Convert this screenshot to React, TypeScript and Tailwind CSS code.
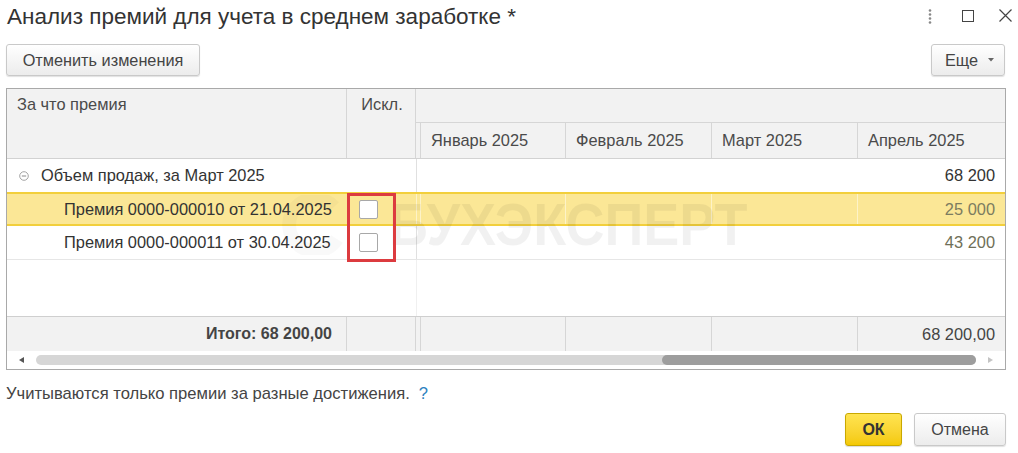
import React from "react";

const F = { fontFamily: '"Liberation Sans", Arial, sans-serif' };

function Checkbox() {
  return <div className="w-[19px] h-[19px] bg-white border border-[#a8a8a8] rounded-[2px]" />;
}

export default function App() {
  const months = [
    { name: "Январь 2025", w: "w-[145px]" },
    { name: "Февраль 2025", w: "w-[146px]" },
    { name: "Март 2025", w: "w-[146px]" },
    { name: "Апрель 2025", w: "w-[147px]" },
  ];
  return (
    <div style={F} className="w-[1018px] h-[453px] bg-white text-[#333] relative overflow-hidden">
      {/* Title bar */}
      <div className="h-[34px] flex items-center justify-between pl-[7px] pr-[6px]">
        <div className="text-[22.5px] leading-[28px] text-[#333] -mt-[1px]">Анализ премий для учета в среднем заработке *</div>
        <div className="flex items-center -mt-[3px]">
          <svg width="6" height="16" viewBox="0 0 6 16" className="mr-[29px]">
            <circle cx="3" cy="2.5" r="1.3" fill="#888" />
            <circle cx="3" cy="6.5" r="1.3" fill="#888" />
            <circle cx="3" cy="10.5" r="1.3" fill="#888" />
            <circle cx="3" cy="14.5" r="1.3" fill="#888" />
          </svg>
          <svg width="12" height="12" viewBox="0 0 12 12" className="mr-[25px]">
            <rect x="0.5" y="0.5" width="11" height="11" fill="none" stroke="#444" strokeWidth="1" />
          </svg>
          <svg width="13" height="13" viewBox="0 0 13 13">
            <path d="M0.5 0.5 L12.5 12.5 M12.5 0.5 L0.5 12.5" stroke="#444" strokeWidth="1.2" />
          </svg>
        </div>
      </div>

      {/* Toolbar */}
      <div className="mt-[10px] h-[32px] flex justify-between pl-[6px] pr-[13px]">
        <button className="h-[32px] w-[194px] rounded-[3px] border border-[#c9c9c9] bg-gradient-to-b from-white to-[#ececec] text-[16.3px] text-[#444] shadow-[0_1px_1px_rgba(0,0,0,0.12)]">
          Отменить изменения
        </button>
        <button className="h-[32px] w-[74px] rounded-[3px] border border-[#c9c9c9] bg-gradient-to-b from-white to-[#ececec] text-[16.3px] text-[#444] shadow-[0_1px_1px_rgba(0,0,0,0.12)] flex items-center justify-center gap-[10px] pl-[3px]">
          <span>Еще</span>
          <svg width="6" height="4" viewBox="0 0 6 4"><path d="M0 0 L6 0 L3 3.5 Z" fill="#666" /></svg>
        </button>
      </div>

      {/* Table */}
      <div className="mt-[12px] ml-[6px] w-[1000px] h-[282px] border border-[#a9a9a9] relative text-[16.4px]">
        {/* Header */}
        <div className="flex h-[70px] bg-[#f2f2f2] border-b border-[#d2d2d2] text-[#4a4a4a]">
          <div className="w-[340px] border-r border-[#d6d6d6] pl-[10px] pt-[4px] leading-[22px]">За что премия</div>
          <div className="w-[69px] border-r border-[#d6d6d6] pt-[4px] leading-[22px] text-center pl-[2px]">Искл.</div>
          <div className="flex-1 flex flex-col">
            <div className="h-[34px] border-b border-[#d6d6d6]" />
            <div className="flex-1 flex">
              <div className="w-[5px] border-r border-[#d6d6d6]" />
              {months.map((m) => (
                <div key={m.name} className={`${m.w} border-r border-[#d6d6d6] last:border-r-0 pl-[10px] flex items-center`}>
                  {m.name}
                </div>
              ))}
            </div>
          </div>
        </div>

        {/* Group row */}
        <div className="flex h-[34px] border-b border-[#ececec]">
          <div className="w-[340px] flex items-center pl-[12px]">
            <svg width="10" height="10" viewBox="0 0 10 10" className="mr-[12px]">
              <circle cx="5" cy="5" r="4.3" fill="none" stroke="#9a9a9a" strokeWidth="0.9" />
              <path d="M2.8 5 H7.2" stroke="#8a8a8a" strokeWidth="1" />
            </svg>
            <span>Объем продаж, за Март 2025</span>
          </div>
          <div className="w-[69px]" />
          <div className="flex-1 border-l border-[#e0e0e0] flex items-center justify-end pr-[10px]">68 200</div>
        </div>

        {/* Row 1 highlighted */}
        <div className="flex h-[34px] bg-[#fbe796] border-y-[2px] border-[#f2cf3c] -mt-[1px]">
          <div className="w-[340px] flex items-center pl-[57px]">Премия 0000-000010 от 21.04.2025</div>
          <div className="w-[69px] flex items-center pl-[12px]"><Checkbox /></div>
          <div className="w-[5px] border-l border-r border-[#fdf3c8]" />
          <div className="w-[145px] border-r border-[#fdf3c8]" />
          <div className="w-[146px] border-r border-[#fdf3c8]" />
          <div className="w-[146px] border-r border-[#fdf3c8]" />
          <div className="flex-1 flex items-center justify-end pr-[10px] text-[#7c7c60]">25 000</div>
        </div>

        {/* Row 2 */}
        <div className="flex h-[34px] border-b border-[#e6e6e6]">
          <div className="w-[340px] flex items-center pl-[57px]">Премия 0000-000011 от 30.04.2025</div>
          <div className="w-[69px] flex items-center pl-[12px]"><Checkbox /></div>
          <div className="flex-1 border-l border-[#e0e0e0] flex items-center justify-end pr-[10px] text-[#6f6f58]">43 200</div>
        </div>

        {/* Empty area */}
        <div className="flex h-[57px] border-b border-[#cfcfcf]">
          <div className="w-[409px]" />
          <div className="flex-1 border-l border-[#f0f0f0]" />
        </div>

        {/* Footer totals */}
        <div className="flex h-[34px] bg-[#f2f2f2] text-[#444]">
          <div className="w-[340px] border-r border-[#d6d6d6] flex items-center justify-end pr-[14px] font-bold text-[16px]">Итого: 68 200,00</div>
          <div className="w-[69px] border-r border-[#d6d6d6]" />
          <div className="w-[5px] border-r border-[#d6d6d6]" />
          <div className="w-[145px] border-r border-[#d6d6d6]" />
          <div className="w-[146px] border-r border-[#d6d6d6]" />
          <div className="w-[146px] border-r border-[#d6d6d6]" />
          <div className="flex-1 flex items-center justify-end pr-[10px]">68 200,00</div>
        </div>

        {/* Scrollbar */}
        <div className="h-[17px] flex items-center pl-[12px] pr-[12px]">
          <svg width="5" height="6" viewBox="0 0 5 6" className="mr-[12px]"><path d="M5 0 L0 3 L5 6 Z" fill="#555" /></svg>
          <div className="flex-1 h-[10px] rounded-full bg-[#d6d6d6] flex">
            <div className="w-[626px]" />
            <div className="flex-1 rounded-full bg-[#9d9d9d]" />
          </div>
          <svg width="5" height="6" viewBox="0 0 5 6" className="ml-[12px]"><path d="M0 0 L5 3 L0 6 Z" fill="#c4c4c4" /></svg>
        </div>

        {/* Watermark */}
        <div className="absolute left-[272px] top-[106px] pointer-events-none flex items-center">
          <svg width="70" height="60" viewBox="0 0 70 60" className="mr-[40px]">
            <path d="M55 12 A26 26 0 1 0 58 44" fill="none" stroke="rgba(0,0,0,0.025)" strokeWidth="14" />
          </svg>
          <div className="text-[60px] leading-[60px] font-bold text-[rgba(0,0,0,0.055)] scale-x-[0.9] origin-left whitespace-nowrap">БУХЭКСПЕРТ</div>
        </div>

        {/* Red highlight box */}
        <div className="absolute left-[340px] top-[104px] w-[49px] h-[69px] border-[3px] border-[#dc3b3f] pointer-events-none" />
      </div>

      {/* Hint */}
      <div className="mt-[14px] pl-[6px] text-[16.6px] leading-[20px] text-[#444]">
        Учитываются только премии за разные достижения.<span className="text-[#2c82c0] ml-[9px]">?</span>
      </div>

      {/* Bottom buttons */}
      <div className="mt-[9px] flex justify-end gap-[12px] pr-[12px]">
        <button className="h-[33px] w-[57px] rounded-[3px] border border-[#c9a800] bg-gradient-to-b from-[#ffe44f] to-[#f4c900] text-[16px] font-bold text-[#333] shadow-[0_1px_1px_rgba(0,0,0,0.15)]">
          ОК
        </button>
        <button className="h-[33px] w-[92px] rounded-[3px] border border-[#c9c9c9] bg-gradient-to-b from-white to-[#ececec] text-[16px] text-[#444] shadow-[0_1px_1px_rgba(0,0,0,0.12)]">
          Отмена
        </button>
      </div>
    </div>
  );
}
